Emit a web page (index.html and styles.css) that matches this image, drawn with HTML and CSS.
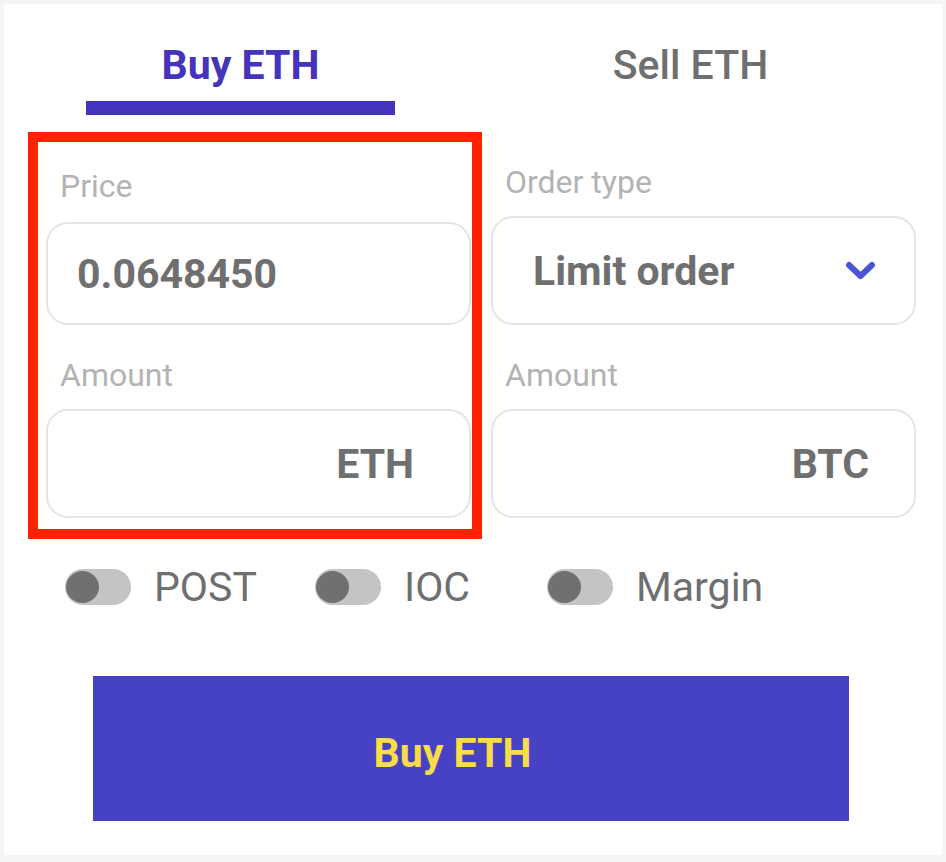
FILE: index.html
```html
<!DOCTYPE html>
<html lang="en">

<head>
  <meta charset="UTF-8">
  <meta name="viewport" content="width=device-width, initial-scale=1.0">
  <title>Trade ETH</title>

  <link rel="stylesheet" href="styles.css">
</head>

<body>
  <div class="panel">
    <!-- Buy / sell switch -->
    <div class="tabs">
      <div class="tab active">Buy ETH</div>
      <div class="tab">Sell ETH</div>
    </div>

    <!-- Order form, left column is the highlighted one -->
    <div class="order">
      <div class="col col-marked">
        <div class="label">Price</div>
        <div class="field field-price">0.0648450</div>
        <div class="label label-next">Amount</div>
        <div class="field field-unit unit-eth">ETH</div>
      </div>
      <div class="col col-plain">
        <div class="label">Order type</div>
        <div class="field field-select">
          <span>Limit order</span>
          <svg class="chevron" width="32" height="22" viewBox="0 0 32 22">
            <polyline points="4,5 15.5,16 27,5" fill="none" stroke="#4a55d2" stroke-width="6"
              stroke-linecap="round" stroke-linejoin="round" />
          </svg>
        </div>
        <div class="label label-next">Amount</div>
        <div class="field field-unit unit-btc">BTC</div>
      </div>
    </div>

    <!-- Order flags -->
    <div class="flags">
      <div class="flag"><span class="switch"></span>POST</div>
      <div class="flag"><span class="switch"></span>IOC</div>
      <div class="flag"><span class="switch"></span>Margin</div>
    </div>

    <button class="submit">Buy ETH</button>
  </div>
</body>

</html>
```

FILE: styles.css
```css
/* Page */
html,
body {
  background-color: #f5f5f5;
}

body {
  margin: 0;
  padding: 4px;
  font-family: Roboto, "Liberation Sans", Arial, sans-serif;
  color: #6f6f6f;
}

.panel {
  width: 938px;
  box-sizing: border-box;
  background-color: #ffffff;
  padding: 37px 24px 34px 24px;
}

/* Tabs */
.tabs {
  display: grid;
  grid-template-columns: 309px 309px;
  column-gap: 141px;
  margin-left: 58px;
}

.tab {
  text-align: center;
  font-size: 41px;
  line-height: 48px;
  font-weight: 500;
  color: #6f6f6f;
  padding-bottom: 26px;
}

.tab.active {
  font-weight: 700;
  color: #4433bb;
  padding-bottom: 12px;
  border-bottom: 14px solid #4433bd;
}

/* Form */
.order {
  display: grid;
  grid-template-columns: 454px 425px;
  column-gap: 9px;
  align-items: start;
  margin-top: 17px;
}

.col-marked {
  border: 10px solid #ff2200;
  padding: 26px 1px 11px 8px;
}

.col-plain {
  padding-top: 32px;
}

.label {
  font-size: 32px;
  line-height: 36px;
  color: #b3b3b3;
  padding-left: 14px;
}

.label-next {
  margin-top: 32px;
}

.field {
  display: flex;
  align-items: center;
  box-sizing: border-box;
  height: 109px;
  margin-top: 16px;
  border: 2px solid #e4e4e4;
  border-radius: 22px;
  font-size: 41px;
  font-weight: 700;
  color: #6f6f6f;
}

.field-price {
  height: 103px;
  margin-top: 18px;
  padding-left: 29px;
}

.field-select {
  margin-top: 16px;
  justify-content: space-between;
  padding: 0 37px 0 40px;
}

.field-unit {
  justify-content: flex-end;
}

.unit-eth {
  padding-right: 55px;
}

.unit-btc {
  padding-right: 45px;
}

.chevron {
  display: block;
}

/* Flags */
.flags {
  display: grid;
  grid-template-columns: 250px 232px auto;
  margin: 30px 0 0 37px;
}

.flag {
  display: flex;
  align-items: center;
  gap: 23px;
  font-size: 41px;
  line-height: 36px;
}

.switch {
  position: relative;
  width: 66px;
  height: 36px;
  border-radius: 18px;
  background-color: #c4c4c4;
}

.switch::after {
  content: "";
  position: absolute;
  left: 1px;
  top: 2px;
  width: 33px;
  height: 32px;
  border-radius: 50%;
  background-color: #707070;
}

/* Submit */
.submit {
  display: flex;
  align-items: center;
  justify-content: center;
  width: 756px;
  height: 145px;
  margin: 71px 0 0 65px;
  padding: 8px 37px 0 0;
  border: none;
  background-color: #4741c4;
  color: #f9dc4a;
  font-family: Roboto, "Liberation Sans", Arial, sans-serif;
  font-size: 41px;
  font-weight: 700;
  cursor: pointer;
}
```
